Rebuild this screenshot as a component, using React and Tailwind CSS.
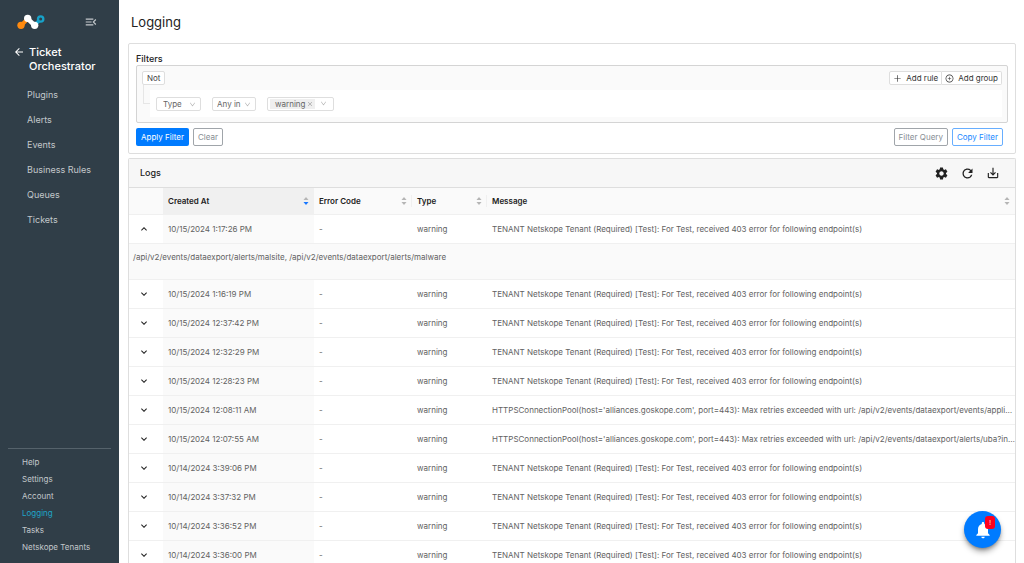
import { useState } from 'react';
import { AiOutlineClose, AiOutlineDown, AiOutlinePlus, AiOutlinePlusCircle } from 'react-icons/ai';
import {
  MdArrowBack,
  MdExpandLess,
  MdExpandMore,
  MdMenuOpen,
  MdNotifications,
  MdRefresh,
  MdSaveAlt,
  MdSettings,
} from 'react-icons/md';

const mainLinks = ['Plugins', 'Alerts', 'Events', 'Business Rules', 'Queues', 'Tickets'];
const footerLinks = ['Help', 'Settings', 'Account', 'Logging', 'Tasks', 'Netskope Tenants'];

const tenantError = 'TENANT Netskope Tenant (Required) [Test]: For Test, received 403 error for following endpoint(s)';
const poolError = "HTTPSConnectionPool(host='alliances.goskope.com', port=443): Max retries exceeded with url: ";

const logs = [
  {
    createdAt: '10/15/2024 1:17:26 PM',
    message: tenantError,
    details: '/api/v2/events/dataexport/alerts/malsite, /api/v2/events/dataexport/alerts/malware',
  },
  { createdAt: '10/15/2024 1:16:19 PM', message: tenantError },
  { createdAt: '10/15/2024 12:37:42 PM', message: tenantError },
  { createdAt: '10/15/2024 12:32:29 PM', message: tenantError },
  { createdAt: '10/15/2024 12:28:23 PM', message: tenantError },
  { createdAt: '10/15/2024 12:08:11 AM', message: poolError + '/api/v2/events/dataexport/events/applicati...' },
  { createdAt: '10/15/2024 12:07:55 AM', message: poolError + '/api/v2/events/dataexport/alerts/uba?inde...' },
  { createdAt: '10/14/2024 3:39:06 PM', message: tenantError },
  { createdAt: '10/14/2024 3:37:32 PM', message: tenantError },
  { createdAt: '10/14/2024 3:36:52 PM', message: tenantError },
  { createdAt: '10/14/2024 3:36:00 PM', message: tenantError },
];

const Logo = () => (
  <svg viewBox="0 0 84 46" className="w-7 h-4" aria-label="Netskope" role="img">
    <path d="M13 33 L33 12" stroke="#ff8a0f" strokeWidth="12" />
    <circle cx="12" cy="33" r="11" fill="#ff8a0f" />
    <path d="M53 33 L68 17" stroke="#17a2c9" strokeWidth="11" />
    <circle cx="71" cy="14" r="8" fill="#303e48" stroke="#17a2c9" strokeWidth="7" />
    <path d="M31 12 L53 33" stroke="#fff" strokeWidth="14" />
    <circle cx="32" cy="12" r="11" fill="#fff" />
    <circle cx="53" cy="33" r="11" fill="#fff" />
  </svg>
);

const Sidebar = () => (
  <aside className="w-[119px] shrink-0 bg-[#303e48] text-[#c3c8cb] flex flex-col">
    <div className="flex items-center justify-between pl-[17px] pr-[21px] pt-[14px]">
      <Logo />
      <button aria-label="Collapse menu">
        <MdMenuOpen size={14} />
      </button>
    </div>
    <a href="#" className="flex items-start gap-1 pl-[13px] mt-[15px] text-white text-[11px] leading-[14px] font-medium">
      <MdArrowBack size={12} className="mt-px" />
      <span>Ticket<br />Orchestrator</span>
    </a>
    <nav className="flex flex-col mt-[9px] pl-[27px] text-[9px] leading-[25px]">
      {mainLinks.map((link) => (
        <a key={link} href="#">{link}</a>
      ))}
    </nav>
    <div className="mt-auto mx-2 border-t border-[#55626b]" />
    <nav className="flex flex-col mt-[5px] mb-[7px] pl-[22px] text-[8px] leading-[17px]">
      {footerLinks.map((link) => (
        <a key={link} href="#" className={link === 'Logging' ? 'text-[#1fa5c8]' : ''}>{link}</a>
      ))}
    </nav>
  </aside>
);

const FilterSelect = ({ label, value, className }) => (
  <div className={`relative h-[14px] ${className}`}>
    <select
      aria-label={label}
      defaultValue={value}
      className="appearance-none block w-full h-full pl-1 rounded-xs border border-[#dedede] bg-white text-[#666] leading-3"
    >
      <option>{value}</option>
    </select>
    <AiOutlineDown size={7} className="absolute right-[5px] top-1 text-[#aaa] pointer-events-none" />
  </div>
);

const Filters = () => (
  <section className="rounded-xs border border-[#dedede] px-[7px] pt-[9px] pb-[7px] text-[8px]">
    <h2 className="text-[9px] leading-3 font-medium text-[#222]">Filters</h2>
    <div className="rounded-xs border border-[#d4d4d4] bg-[#fafafa] px-[5px] pt-[5px] pb-[5px]">
      <div className="flex justify-between">
        <button className="h-[14px] px-1 rounded-xs border border-[#dedede] bg-white text-[#444] leading-none">Not</button>
        <div className="flex h-[14px] text-[#333] leading-none">
          <button className="flex items-center gap-1 px-[3px] rounded-l-xs border border-[#dedede] bg-white">
            <AiOutlinePlus size={9} />
            Add rule
          </button>
          <button className="flex items-center gap-1 px-[3px] rounded-r-xs border border-l-0 border-[#dedede] bg-white">
            <AiOutlinePlusCircle size={9} />
            Add group
          </button>
        </div>
      </div>
      <div className="flex">
        <div className="ml-px w-[7px] h-[19px] border-l border-b border-[#e6e6e6]" />
        <div className="flex-1 flex items-center gap-[11px] mt-[5px] h-[27px] pl-[6px] bg-white">
          <FilterSelect label="Field" value="Type" className="w-[45px] [&>select]:pl-[6px]" />
          <FilterSelect label="Operator" value="Any in" className="w-[44px]" />
          <div className="flex items-center h-[14px] px-0.5 rounded-xs border border-[#dedede] text-[#666] leading-none">
            <span className="flex items-center gap-0.5 h-[10px] pl-[5px] pr-0.5 bg-[#efefef]">
              warning
              <button aria-label="Remove warning" className="text-[#888]"><AiOutlineClose size={6} /></button>
            </span>
            <button aria-label="Choose values" className="pl-[5px] pr-1 text-[#aaa]"><AiOutlineDown size={7} /></button>
          </div>
        </div>
      </div>
    </div>
    <div className="flex gap-1 mt-[5px] pr-[5px]">
      <button className="h-[18px] px-[5px] rounded-xs bg-[#007bff] text-white">Apply Filter</button>
      <button className="h-[18px] px-1 rounded-xs border border-[#a0a5aa] text-[#868d93]">Clear</button>
      <button className="ml-auto h-[18px] px-1 rounded-xs border border-[#a0a5aa] text-[#868d93]">Filter Query</button>
      <button className="h-[18px] px-1 rounded-xs border border-[#67aeff] text-[#2088ff]">Copy Filter</button>
    </div>
  </section>
);

const SortIcon = ({ active }) => (
  <svg viewBox="0 0 6 8" className="w-[6px] h-2">
    <path d="M0.5 3 L3 0 L5.5 3 Z" fill="#b5b5b5" />
    <path d="M0.5 5 L3 8 L5.5 5 Z" fill={active ? '#1677ff' : '#b5b5b5'} />
  </svg>
);

const HeaderCell = ({ title, active, last, className = '' }) => (
  <th className={`p-0 font-semibold text-left ${className}`}>
    <button className={`flex items-center justify-between w-full h-3 pl-[5px] ${last ? 'pr-[5px]' : 'pr-1 border-r border-[#f0f0f0]'}`}>
      {title}
      <SortIcon active={active} />
    </button>
  </th>
);

const LogRow = ({ log, open, onToggle }) => (
  <>
    <tr className="h-[29px] border-b border-[#f0f0f0]">
      <td className="p-0">
        <button aria-label="Toggle details" onClick={onToggle} className="block ml-[9px] text-[#222]">
          {open ? <MdExpandLess size={12} /> : <MdExpandMore size={12} />}
        </button>
      </td>
      <td className="px-[5px] bg-[#fafafa]">{log.createdAt}</td>
      <td className="px-[5px]">-</td>
      <td className="px-[5px]">warning</td>
      <td className="pl-[5px] truncate">{log.message}</td>
    </tr>
    {open && (
      <tr className="h-[36px] border-b border-[#f0f0f0] bg-[#fafafa]">
        <td colSpan={5} className="px-1 pt-[7px] align-top">{log.details}</td>
      </tr>
    )}
  </>
);

const Logs = () => {
  const [expanded, setExpanded] = useState(0);
  return (
    <section className="mt-1 flex-1 min-h-0 overflow-hidden rounded-t-xs border border-b-0 border-[#dedede]">
      <div className="flex items-center h-[29px] pl-[11px] pr-[15px] bg-[#f7f7f7] border-b border-[#dedede] text-[#222]">
        <h2 className="text-[9px] font-medium">Logs</h2>
        <div className="flex gap-[11px] ml-auto">
          <button aria-label="Settings"><MdSettings size={15} /></button>
          <button aria-label="Refresh"><MdRefresh size={15} /></button>
          <button aria-label="Download"><MdSaveAlt size={14} /></button>
        </div>
      </div>
      <table className="w-full table-fixed border-collapse text-[8px] leading-3 text-[#626262]">
        <colgroup>
          <col className="w-[34px]" />
          <col className="w-[151px]" />
          <col className="w-[98px]" />
          <col className="w-[75px]" />
          <col />
        </colgroup>
        <thead className="bg-[#fafafa] text-[#222]">
          <tr className="h-[26px] border-b border-[#f0f0f0]">
            <th aria-label="Expand" />
            <HeaderCell title="Created At" active className="bg-[#f0f0f0]" />
            <HeaderCell title="Error Code" />
            <HeaderCell title="Type" />
            <HeaderCell title="Message" last />
          </tr>
        </thead>
        <tbody>
          {logs.map((log, i) => (
            <LogRow
              key={log.createdAt}
              log={log}
              open={expanded === i}
              onToggle={() => setExpanded(expanded === i ? null : i)}
            />
          ))}
        </tbody>
      </table>
    </section>
  );
};

const App = () => {
  return (
    <div className="flex h-screen overflow-hidden bg-white font-[Inter,sans-serif]">
      <Sidebar />
      <main className="flex-1 min-w-0 flex flex-col pl-[9px] pr-2">
        <h1 className="pl-[3px] pt-[13px] pb-3 text-[13px] leading-[18px] text-[#222]">Logging</h1>
        <Filters />
        <Logs />
      </main>
      <button
        aria-label="Notifications"
        className="fixed right-[23px] bottom-[15px] w-[37px] h-[37px] rounded-full bg-[#007bff] text-white shadow-md shadow-black/40 flex items-center justify-center"
      >
        <MdNotifications size={20} />
        <span className="absolute top-[5px] right-[6px] w-[10px] h-[13px] rounded-[3px] bg-[#ff001d] text-[6px] leading-[13px]">!</span>
      </button>
    </div>
  );
};

export default App;
